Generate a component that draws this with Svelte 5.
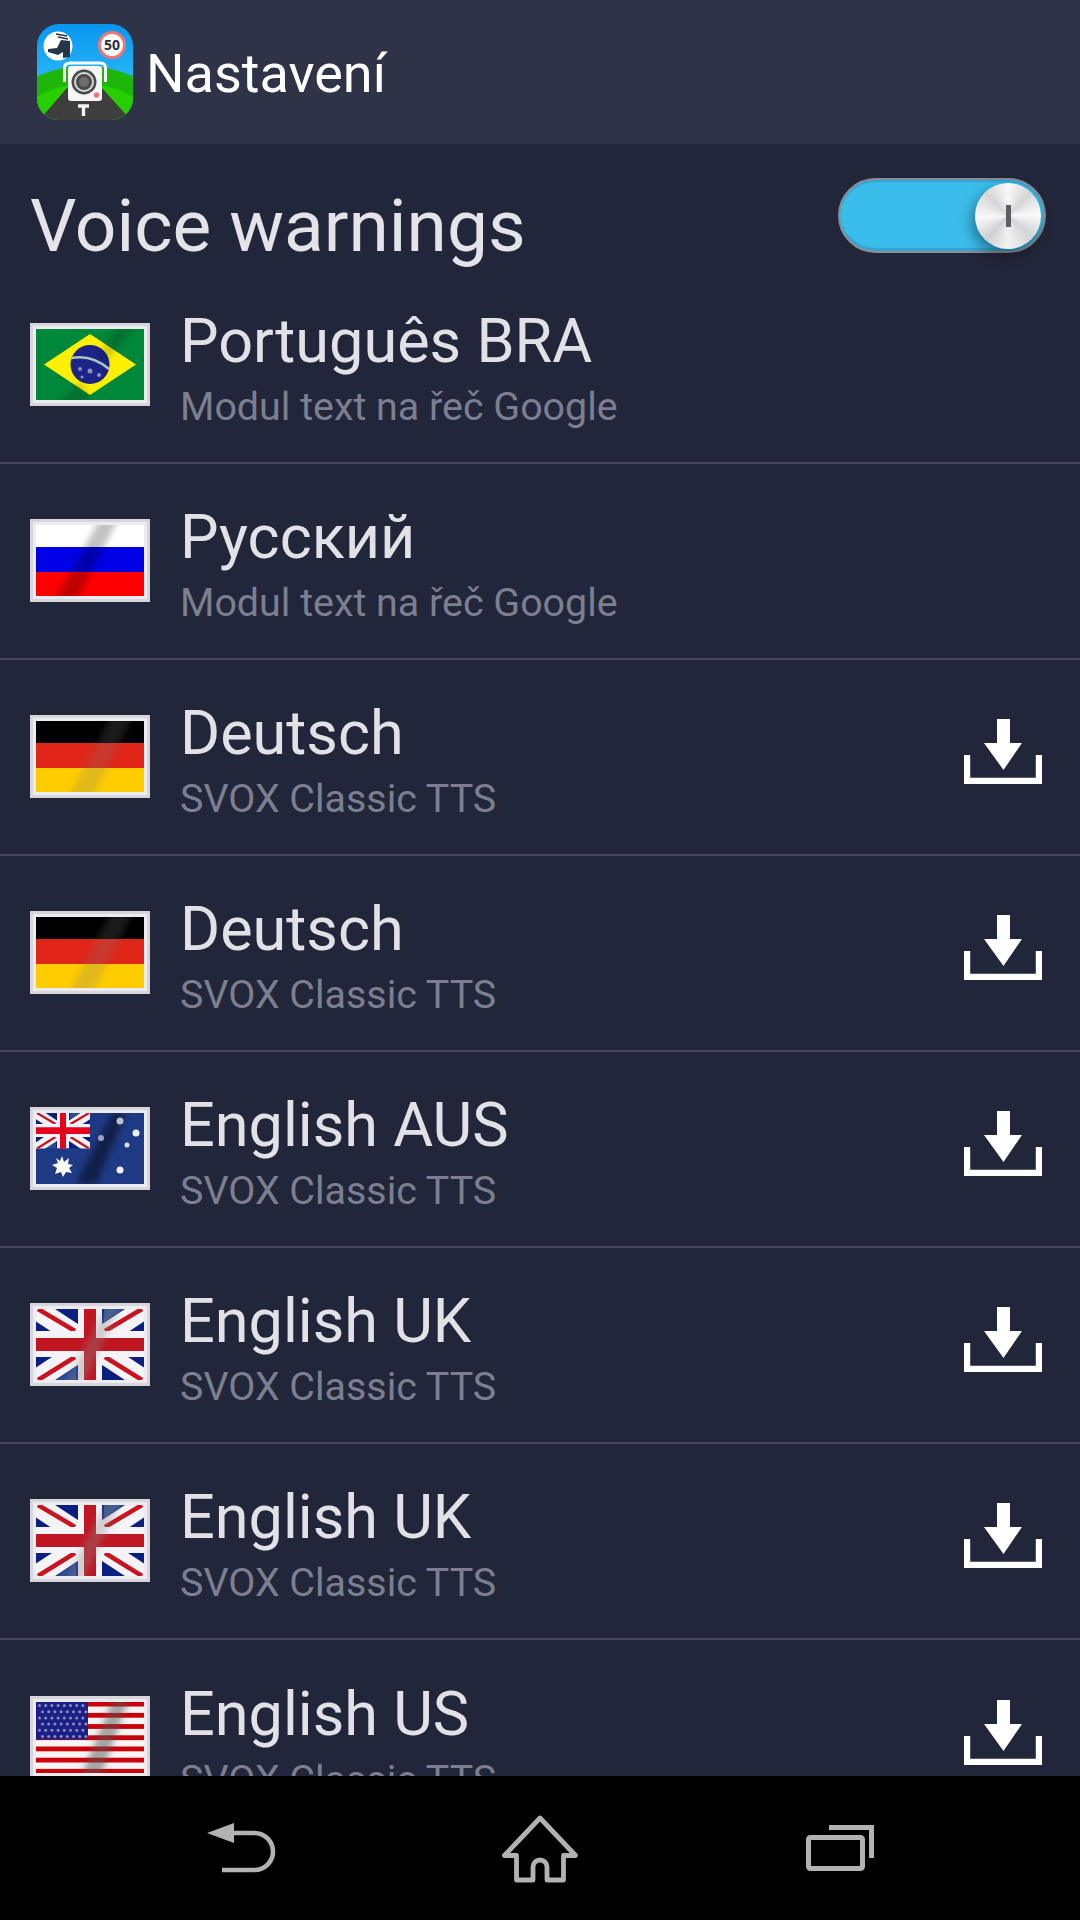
<script lang="ts">
  type Voice = {
    flag: string
    title: string
    engine: string
    download: boolean
  }

  const google = "Modul text na řeč Google"
  const svox = "SVOX Classic TTS"

  const voices: Voice[] = [
    { flag: "br", title: "Português BRA", engine: google, download: false },
    { flag: "ru", title: "Русский", engine: google, download: false },
    { flag: "de", title: "Deutsch", engine: svox, download: true },
    { flag: "de", title: "Deutsch", engine: svox, download: true },
    { flag: "au", title: "English AUS", engine: svox, download: true },
    { flag: "uk", title: "English UK", engine: svox, download: true },
    { flag: "uk", title: "English UK", engine: svox, download: true },
    { flag: "us", title: "English US", engine: svox, download: true },
  ]

  const usStripes = [0, 1, 2, 3, 4, 5, 6]
  const usStars: number[][] = []
  for (let r = 0; r < 6; r++) {
    for (let c = 0; c < 8; c++) {
      usStars.push([9.5 + c * 6.2 + (r % 2) * 3, 9.5 + r * 6.2])
    }
  }
</script>

{#snippet union()}
  <rect x="6" y="6" width="108" height="71" fill="#0a1f80" />
  <path d="M6 6 L114 77 M114 6 L6 77" stroke="#f4f4f8" stroke-width="21" />
  <path d="M8 6 L45 28 M112 6 L75 28 M8 77 L45 54 M112 77 L75 54" stroke="#c8141e" stroke-width="4.5" />
  <rect x="48" y="6" width="24" height="71" fill="#f4f4f8" />
  <rect x="6" y="28" width="108" height="26" fill="#f4f4f8" />
  <rect x="54" y="6" width="12" height="71" fill="#c01622" />
  <rect x="6" y="35" width="108" height="13" fill="#c01622" />
  <path d="M74 6 H94 L74 19 Z M46 77 H26 L46 64 Z" fill="#2b4a94" />
{/snippet}

{#snippet flagArt(id: string)}
  <svg class="flag" viewBox="0 0 120 83">
    <rect width="120" height="83" fill="#d6d6da" />
    <rect x="3" y="3" width="114" height="77" fill="#ececf0" />
    <g clip-path="url(#flag-inner)">
      {#if id === "br"}
        <rect x="6" y="6" width="108" height="71" fill="#00883a" />
        <path d="M14 41.5 L60 11 L106 41.5 L60 72 Z" fill="#fff000" />
        <circle cx="60" cy="41.5" r="19.5" fill="#1c2488" />
        <path d="M41 35 Q62 31 79 46" stroke="#a8c8c0" stroke-width="2.5" fill="none" />
        <circle cx="50" cy="46" r="2" fill="#8c90c8" />
        <circle cx="60" cy="48" r="2.5" fill="#8c90c8" />
        <circle cx="69" cy="52" r="2" fill="#8c90c8" />
        <circle cx="52" cy="54" r="1.5" fill="#8c90c8" />
        <path d="M88 2 L108 2 L78 36 L66 36 Z M50 58 L62 78 L34 88 L20 88 Z" fill="#000" opacity="0.16" filter="url(#sheen-blur)" />
      {:else if id === "ru"}
        <rect x="6" y="6" width="108" height="26" fill="#fff" />
        <rect x="6" y="28" width="108" height="25" fill="#0000e6" />
        <rect x="6" y="53" width="108" height="24" fill="#fe0000" />
        <path d="M70 0 L88 0 L46 83 L24 83 Z" fill="#000" opacity="0.24" filter="url(#sheen-blur)" />
      {:else if id === "de"}
        <rect x="6" y="6" width="108" height="23" fill="#000" />
        <rect x="6" y="28" width="108" height="25" fill="#e02618" />
        <rect x="6" y="53" width="108" height="24" fill="#ffcc00" />
        <path d="M82 0 L104 0 L62 83 L38 83 Z" fill="#777" opacity="0.22" filter="url(#sheen-blur)" />
      {:else if id === "au"}
        <rect x="6" y="6" width="108" height="71" fill="#1f3a84" />
        <svg x="6" y="6" width="54" height="35.5" viewBox="6 6 108 71" preserveAspectRatio="none">
          {@render union()}
          <rect x="54" y="6" width="12" height="71" fill="#e8001c" />
          <rect x="6" y="35" width="108" height="13" fill="#e8001c" />
        </svg>
        <path d="M82 6 L96 6 L66 77 L46 77 Z" fill="#000" opacity="0.45" filter="url(#sheen-blur)" />
        <path
          d="M32 49 L34 55 L39 51 L38 57 L43 58 L39 61 L42 66 L36 65 L33 70 L31 65 L25 67 L27 61 L22 58 L28 56 L26 51 L30 54 Z"
          fill="#fff"
        />
        <circle cx="90" cy="14" r="3.5" fill="#b8bdd0" />
        <circle cx="106" cy="26" r="3.5" fill="#f0f0f4" />
        <circle cx="71" cy="31" r="3" fill="#9aa2bc" />
        <circle cx="97" cy="38" r="2.5" fill="#dcdfe8" />
        <circle cx="90" cy="63" r="3.5" fill="#f0f0f4" />
      {:else if id === "uk"}
        {@render union()}
        <path d="M78 0 L92 0 L52 83 L34 83 Z" fill="#888" opacity="0.35" filter="url(#sheen-blur)" />
      {:else if id === "us"}
        <rect x="6" y="6" width="108" height="71" fill="#f6f4f4" />
        {#each usStripes as i}
          <rect x="6" y={5.7 + i * 11.2} width="108" height="4.8" fill="#cc0008" />
        {/each}
        <rect x="6" y="6" width="52" height="37.5" fill="#1c2084" />
        {#each usStars as s}
          <circle cx={s[0]} cy={s[1]} r="1.5" fill="#8a8cc4" />
        {/each}
        <path d="M84 0 L100 0 L70 83 L50 83 Z" fill="#555" opacity="0.5" filter="url(#sheen-blur)" />
      {/if}
    </g>
  </svg>
{/snippet}

<div class="screen">
  <svg class="defs" width="0" height="0">
    <defs>
      <clipPath id="flag-inner"><rect x="6" y="6" width="108" height="71" /></clipPath>
      <clipPath id="icon-clip"><rect width="96" height="96" rx="22" /></clipPath>
      <filter id="sheen-blur" x="-30%" y="-30%" width="160%" height="160%">
        <feGaussianBlur stdDeviation="3" />
      </filter>
      <linearGradient id="sky" x1="0" y1="0" x2="0" y2="1">
        <stop offset="0" stop-color="#0796f0" />
        <stop offset="0.55" stop-color="#27b4f8" />
      </linearGradient>
    </defs>
  </svg>

  <header class="bar">
    <svg class="app-icon" viewBox="0 0 96 96">
      <g clip-path="url(#icon-clip)">
        <rect width="96" height="96" fill="url(#sky)" />
        <path d="M-4 54 Q48 30 100 54 V100 H-4 Z" fill="#1fb60a" />
        <path d="M-4 76 Q8 66 28 62 L68 62 Q88 66 100 76 V100 H-4 Z" fill="#27cf00" />
        <path d="M30 64 L65 64 L92 94 V100 H4 V94 Z" fill="#3e3e3e" />
        <circle cx="21" cy="22" r="14.5" fill="#fff" />
        <path d="M11 25 L20 24 L24 16 L33 17 L33 33 L26 34 L26 28 L21 31 L11 28 Z" fill="#26364a" />
        <path d="M19 10 L30 12 M21 13 L31 15" stroke="#26364a" stroke-width="1.6" fill="none" />
        <circle cx="75" cy="21" r="14" fill="#ef7676" />
        <circle cx="75" cy="21" r="11" fill="#fff" />
        <text class="limit" x="75" y="26" text-anchor="middle">50</text>
        <path d="M27.5 58 V44 Q27.5 39 33 39 H63 Q68.5 39 68.5 44 V58" fill="none" stroke="#fff" stroke-width="3" />
        <rect x="31" y="42" width="34" height="35" rx="3" fill="#f6f6f6" />
        <circle cx="47" cy="58" r="12.5" fill="#4a4a4a" />
        <circle cx="47" cy="58" r="10" fill="#d8d8d8" />
        <circle cx="47" cy="58" r="8" fill="#4a4a4a" />
        <circle cx="47" cy="58" r="5" fill="#6e6e6e" />
        <circle cx="59.5" cy="71" r="2.7" fill="#f07272" />
        <path d="M41 82 H52 M46.5 82 V92" stroke="#f4f4f4" stroke-width="3.4" fill="none" />
      </g>
    </svg>
    <span class="bar-title">Nastavení</span>
  </header>

  <div class="heading">
    <h1>Voice warnings</h1>
    <div class="toggle">
      <div class="knob"><span class="tick"></span></div>
    </div>
  </div>

  <div class="list">
    {#each voices as v, i}
      <div class="row" class:ruled={i < voices.length - 1}>
        {@render flagArt(v.flag)}
        <div class="labels">
          <div class="name">{v.title}</div>
          <div class="engine">{v.engine}</div>
        </div>
        {#if v.download}
          <svg class="download" viewBox="0 0 78 65">
            <path d="M33 0 H46 V24 H58 L39.5 51 L20 24 H33 Z" fill="#fff" />
            <path d="M3 36 V62 H75 V36" fill="none" stroke="#fff" stroke-width="6.4" />
          </svg>
        {/if}
      </div>
    {/each}
  </div>

  <nav class="keys">
    <svg viewBox="190 1808 100 80">
      <path d="M234 1823 V1843 L207 1833 Z" fill="#b2b2b2" />
      <path d="M232 1833 H254.5 A18.5 18.5 0 0 1 254.5 1870 H222" fill="none" stroke="#b2b2b2" stroke-width="4.6" />
    </svg>
    <svg viewBox="490 1808 100 80">
      <path
        d="M540 1818 L504.5 1855.5 H516.5 V1880 H533 V1867 A7 7 0 0 1 547 1867 V1880 H563.5 V1855.5 H575.5 Z"
        fill="none"
        stroke="#b2b2b2"
        stroke-width="4.8"
        stroke-linejoin="round"
      />
    </svg>
    <svg viewBox="790 1808 100 80">
      <rect x="808.5" y="1837.5" width="54" height="31" rx="2" fill="none" stroke="#b2b2b2" stroke-width="5" />
      <path d="M829 1827.5 H871.5 V1858" fill="none" stroke="#b2b2b2" stroke-width="5" />
    </svg>
  </nav>
</div>

<style>
  :global(body) {
    background: #22263a;
  }

  .screen {
    display: flex;
    flex-direction: column;
    width: 1080px;
    height: 1920px;
    overflow: hidden;
    background: #22263a;
    font-family: Roboto, "Liberation Sans", sans-serif;
    position: relative;
  }

  .defs {
    position: absolute;
  }

  .bar {
    flex: none;
    display: flex;
    align-items: center;
    gap: 13px;
    height: 144px;
    padding-left: 37px;
    box-sizing: border-box;
    background: #2e3347;
  }

  .app-icon {
    width: 96px;
    height: 96px;
  }

  .limit {
    font-family: "Open Sans", sans-serif;
    font-size: 14px;
    font-weight: 700;
    fill: #2e3040;
  }

  .bar-title {
    font-size: 54px;
    line-height: 64px;
    margin-top: 4px;
    color: #fff;
  }

  .heading {
    flex: none;
    display: flex;
    justify-content: space-between;
    align-items: flex-start;
    height: 123px;
    padding: 34px 34px 0 30px;
    box-sizing: border-box;
  }

  h1 {
    margin: 0;
    font-size: 73px;
    font-weight: 400;
    line-height: 96px;
    color: #e4e4e8;
  }

  .toggle {
    position: relative;
    width: 208px;
    height: 75px;
    box-sizing: border-box;
    border: 2px solid #8a8c94;
    border-radius: 38px;
    background: #3bbdec;
    box-shadow: inset 0 2px 1px #34a4d2, inset 0 -3px 1px #34a4d2;
  }

  .knob {
    position: absolute;
    right: 3px;
    top: 3px;
    width: 66px;
    height: 66px;
    display: flex;
    align-items: center;
    justify-content: center;
    border-radius: 50%;
    background: conic-gradient(#f8f8f8, #d6d6d8 12%, #fafafa 24%, #d4d4d6 36%, #f2f2f2 50%, #d0d0d3 62%, #f8f8f8 74%, #d6d6d8 88%, #f8f8f8);
    box-shadow: -3px 6px 14px rgba(0, 0, 0, 0.4);
  }

  .tick {
    width: 5px;
    height: 22px;
    background: #5e5e62;
  }

  .list {
    flex: 1;
    min-height: 0;
    padding-top: 1px;
    overflow: hidden;
  }

  .row {
    display: flex;
    align-items: center;
    height: 196px;
    padding: 0 30px;
    box-sizing: border-box;
  }

  .ruled {
    border-bottom: 2px solid #45485a;
  }

  .flag {
    flex: none;
    width: 120px;
    height: 83px;
    margin-bottom: 1px;
  }

  .labels {
    flex: 1;
    margin-left: 30px;
    padding-top: 9px;
  }

  .name {
    font-size: 61.2px;
    line-height: 75px;
    color: #e2e2e6;
  }

  .engine {
    font-size: 39.4px;
    line-height: 56px;
    color: #7c7f90;
  }

  .download {
    flex: none;
    width: 78px;
    height: 65px;
    margin: -12px 8px 0 0;
  }

  .keys {
    flex: none;
    display: flex;
    justify-content: center;
    align-items: center;
    gap: 200px;
    height: 144px;
    background: #000;
  }

  .keys svg {
    width: 100px;
    height: 80px;
  }
</style>
